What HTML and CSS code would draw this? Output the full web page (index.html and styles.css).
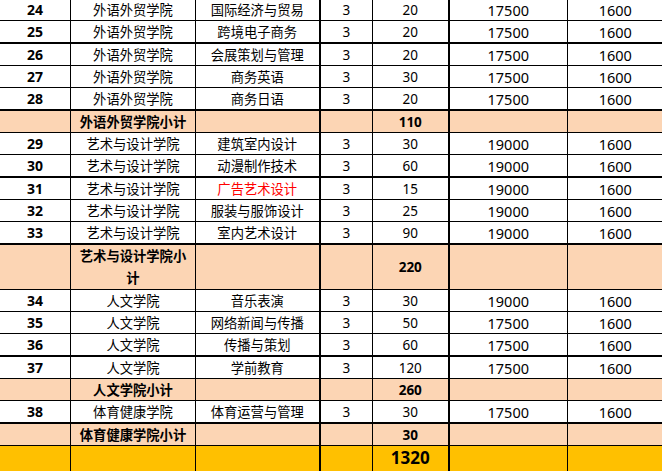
FILE: index.html
```html
<!DOCTYPE html>
<html lang="zh-CN">
<head>
<meta charset="utf-8">
<title>招生计划</title>
<link rel="stylesheet" href="styles.css">
</head>
<body>
<table class="plan">
<colgroup>
<col class="c1"><col class="c2"><col class="c3"><col class="c4"><col class="c5"><col class="c6"><col class="c7">
</colgroup>
<tbody>
<tr><td class="id">24</td><td>外语外贸学院</td><td>国际经济与贸易</td><td class="n">3</td><td class="n">20</td><td class="m">17500</td><td class="m">1600</td></tr>
<tr class="tb"><td class="id">25</td><td>外语外贸学院</td><td>跨境电子商务</td><td class="n">3</td><td class="n">20</td><td class="m">17500</td><td class="m">1600</td></tr>
<tr><td class="id">26</td><td>外语外贸学院</td><td>会展策划与管理</td><td class="n">3</td><td class="n">20</td><td class="m">17500</td><td class="m">1600</td></tr>
<tr><td class="id">27</td><td>外语外贸学院</td><td>商务英语</td><td class="n">3</td><td class="n">30</td><td class="m">17500</td><td class="m">1600</td></tr>
<tr class="tb"><td class="id">28</td><td>外语外贸学院</td><td>商务日语</td><td class="n">3</td><td class="n">20</td><td class="m">17500</td><td class="m">1600</td></tr>
<tr class="sub"><td></td><td class="lbl">外语外贸学院小计</td><td></td><td></td><td class="sn">110</td><td></td><td></td></tr>
<tr><td class="id">29</td><td>艺术与设计学院</td><td>建筑室内设计</td><td class="n">3</td><td class="n">30</td><td class="m">19000</td><td class="m">1600</td></tr>
<tr class="tb"><td class="id">30</td><td>艺术与设计学院</td><td>动漫制作技术</td><td class="n">3</td><td class="n">60</td><td class="m">19000</td><td class="m">1600</td></tr>
<tr><td class="id">31</td><td>艺术与设计学院</td><td class="red">广告艺术设计</td><td class="n">3</td><td class="n">15</td><td class="m">19000</td><td class="m">1600</td></tr>
<tr><td class="id">32</td><td>艺术与设计学院</td><td>服装与服饰设计</td><td class="n">3</td><td class="n">25</td><td class="m">19000</td><td class="m">1600</td></tr>
<tr class="tb"><td class="id">33</td><td>艺术与设计学院</td><td>室内艺术设计</td><td class="n">3</td><td class="n">90</td><td class="m">19000</td><td class="m">1600</td></tr>
<tr class="sub tall"><td></td><td class="lbl">艺术与设计学院小<br>计</td><td></td><td></td><td class="sn">220</td><td></td><td></td></tr>
<tr><td class="id">34</td><td>人文学院</td><td>音乐表演</td><td class="n">3</td><td class="n">30</td><td class="m">19000</td><td class="m">1600</td></tr>
<tr><td class="id">35</td><td>人文学院</td><td>网络新闻与传播</td><td class="n">3</td><td class="n">50</td><td class="m">17500</td><td class="m">1600</td></tr>
<tr class="tb"><td class="id">36</td><td>人文学院</td><td>传播与策划</td><td class="n">3</td><td class="n">60</td><td class="m">17500</td><td class="m">1600</td></tr>
<tr><td class="id">37</td><td>人文学院</td><td>学前教育</td><td class="n">3</td><td class="n">120</td><td class="m">17500</td><td class="m">1600</td></tr>
<tr class="sub"><td></td><td class="lbl">人文学院小计</td><td></td><td></td><td class="sn">260</td><td></td><td></td></tr>
<tr class="tb"><td class="id">38</td><td>体育健康学院</td><td>体育运营与管理</td><td class="n">3</td><td class="n">30</td><td class="m">17500</td><td class="m">1600</td></tr>
<tr class="sub"><td></td><td class="lbl">体育健康学院小计</td><td></td><td></td><td class="sn">30</td><td></td><td></td></tr>
<tr class="total"><td></td><td></td><td></td><td></td><td class="tn">1320</td><td></td><td></td></tr>
</tbody>
</table>
</body>
</html>
```
FILE: styles.css
```css
html, body {
  margin: 0;
  padding: 0;
  background: #ffffff;
  overflow: hidden;
}
.plan {
  border-collapse: collapse;
  table-layout: fixed;
  width: 664px;
  margin: -2px 0 0 -1px;
  font-family: "Noto Sans CJK SC", sans-serif;
  font-size: 13.3px;
  color: #000;
}
.c1 { width: 71px; }
.c2 { width: 125px; }
.c3 { width: 124px; }
.c4 { width: 53px; }
.c5 { width: 76px; }
.c6 { width: 119px; }
.c7 { width: 96px; }
.plan td {
  border: 1px solid #000;
  height: 21px;
  padding: 0;
  text-align: center;
  vertical-align: middle;
  line-height: 16px;
  white-space: nowrap;
  overflow: hidden;
}
.plan td:nth-child(3),
.plan td:nth-child(5),
.plan td:nth-child(7) {
  border-right-width: 2px;
}
.plan tr.tb td { border-bottom-width: 2px; }
.id {
  font-family: "Noto Sans", "Noto Sans CJK SC", sans-serif;
  font-weight: bold;
  font-size: 14px;
}
.n {
  font-family: "Noto Sans", sans-serif;
  font-size: 13.5px;
}
.m {
  font-family: "Noto Sans", sans-serif;
  font-size: 14.5px;
}
.red { color: #ff0000; }
.sub td { background: #fcd5b4; }
.lbl { font-weight: bold; }
.plan tr.tall td { height: 41.5px; }
.plan tr.tall td.lbl { white-space: normal; line-height: 22px; }
.sn {
  font-family: "Noto Sans", sans-serif;
  font-weight: bold;
  font-size: 13.5px;
}
.total td { background: #ffc000; }
.plan tr.total td { height: 30px; vertical-align: top; padding-top: 4px; }
.tn {
  font-family: "Noto Sans", sans-serif;
  font-weight: bold;
  font-size: 17px;
  line-height: 20px;
}
```
